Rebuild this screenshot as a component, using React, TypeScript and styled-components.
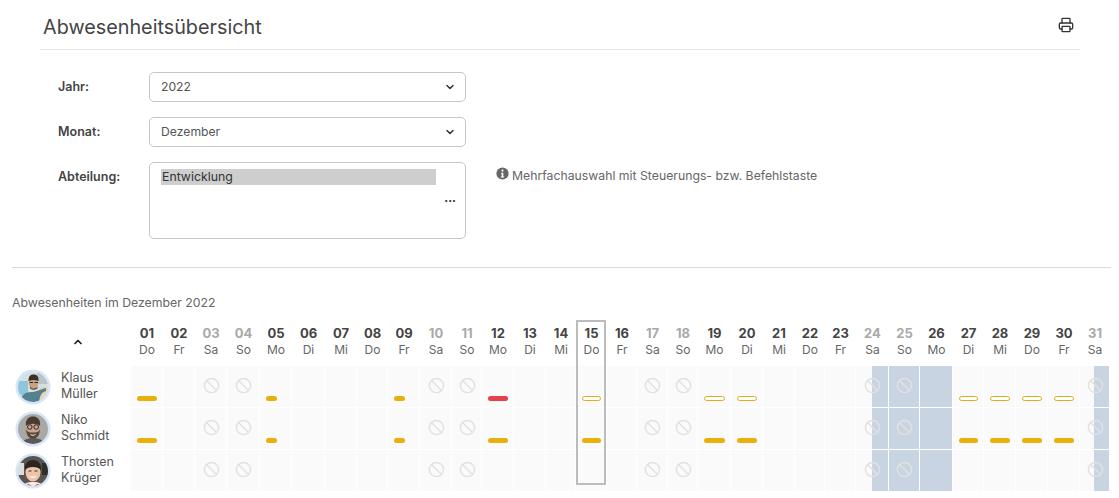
import React from "react";
import styled, { createGlobalStyle } from "styled-components";
import { Ban, ChevronDown, ChevronUp, Printer } from "lucide-react";

const Global = createGlobalStyle`
  html, body { margin: 0; padding: 0; background: #fff; }
  body { font-family: Inter, "Liberation Sans", sans-serif; color: #444; -webkit-font-smoothing: antialiased; }
`;

const Page = styled.div`
  width: 1119px;
  height: 498px;
  overflow: hidden;
  box-sizing: border-box;
  padding: 0 8px 0 12px;
`;

const Header = styled.header`
  height: 50px;
  margin: 0 31px 0 28px;
  padding: 0 6px 0 3px;
  box-sizing: border-box;
  border-bottom: 1px solid #e3e3e3;
  display: flex;
  align-items: center;
  justify-content: space-between;
`;

const Title = styled.h1`
  margin: 4px 0 0;
  font-size: 19.8px;
  line-height: 24px;
  font-weight: 400;
  color: #444;
`;

const PrintIcon = styled(Printer)`
  width: 16px;
  height: 16px;
  color: #333;
`;

const Form = styled.section`
  padding: 22px 0 28px 46px;
  display: flex;
  flex-direction: column;
  gap: 15px;
  border-bottom: 1px solid #d9d9d9;
`;

const FormRow = styled.div`
  display: grid;
  grid-template-columns: 91px 317px auto;
  align-items: start;
`;

const Label = styled.label`
  font-size: 12.5px;
  font-weight: 600;
  line-height: 30px;
  color: #444;
`;

const Select = styled.div`
  height: 30px;
  box-sizing: border-box;
  border: 1px solid #c6c6c6;
  border-radius: 5px;
  display: flex;
  align-items: center;
  justify-content: space-between;
  padding: 0 9px 2px 11px;
  font-size: 12.2px;
  color: #555;
`;

const Caret = styled(ChevronDown)`
  width: 12px;
  height: 12px;
  margin-top: 2px;
  color: #333;
  stroke-width: 3;
`;

const ListBox = styled.div`
  height: 77px;
  box-sizing: border-box;
  border: 1px solid #c6c6c6;
  border-radius: 5px;
  padding: 6px 29px 0 11px;
  display: flex;
  flex-direction: column;
`;

const Option = styled.div`
  height: 16px;
  line-height: 16px;
  background: #cecece;
  color: #333;
  font-size: 12.3px;
  padding-left: 1px;
`;

const Dots = styled.span`
  align-self: flex-end;
  margin: 10px -20px 0 0;
  font-size: 11px;
  font-weight: 800;
  line-height: 12px;
  color: #333;
`;

const Hint = styled.p`
  margin: 4px 0 0 30px;
  display: flex;
  align-items: flex-start;
  gap: 3px;
  font-size: 12.25px;
  line-height: 18px;
  color: #666;
  span {
    padding-top: 1px;
  }
`;

const InfoIcon = styled.svg`
  width: 13px;
  height: 13px;
  margin-top: 1px;
  color: #666;
`;

const Caption = styled.h2`
  margin: 27px 0 11px;
  font-size: 12.3px;
  line-height: 16px;
  font-weight: 400;
  color: #666;
`;

const widths = [119, 32, 32, 32, 33, 32, 33, 32, 31, 32, 32, 30, 32, 32, 30, 31, 30, 31, 30, 33, 32, 32, 30, 31, 33, 31, 33, 31, 32, 32, 32, 30];

const Grid = styled.div`
  position: relative;
  display: grid;
  grid-template-columns: ${widths.map((w) => `${w}px`).join(" ")};
  grid-template-rows: 44px repeat(3, 42px);
`;

const SortCell = styled.div`
  display: flex;
  align-items: center;
  justify-content: center;
  padding: 0 0 4px 13px;
  box-sizing: border-box;
`;

const SortIcon = styled(ChevronUp)`
  width: 12px;
  height: 12px;
  color: #222;
  stroke-width: 3.5;
`;

const DayHead = styled.div<{ $off: boolean }>`
  display: flex;
  flex-direction: column;
  align-items: center;
  padding-top: 2px;
  white-space: nowrap;
  b {
    font-size: 13px;
    line-height: 18px;
    font-weight: 700;
    color: ${(p) => (p.$off ? "#a9a9a9" : "#444")};
  }
  span {
    font-size: 12px;
    line-height: 16px;
    color: #666;
  }
`;

const Person = styled.div`
  display: flex;
  align-items: center;
  gap: 10px;
  padding: 0 0 0 3px;
  font-size: 12.5px;
  line-height: 16px;
  color: #555;
`;

const PersonName = styled.div`
  margin-top: -3px;
`;

const AvatarSvg = styled.svg`
  width: 36px;
  height: 36px;
  flex: none;
  margin-top: -1px;
`;

const blueBg: Record<string, string> = {
  none: "#fafafa",
  half: "linear-gradient(90deg, #fafafa 50%, #c9d4e2 50%)",
  full: "#c9d4e2",
};

const Cell = styled.div<{ $blue: string }>`
  box-sizing: border-box;
  border-right: 1px solid #fff;
  border-bottom: 1px solid #fff;
  background: ${(p) => blueBg[p.$blue]};
  display: flex;
  flex-direction: column;
  padding: 11px 5px 6px 6px;
  min-width: 0;
`;

const BanIcon = styled(Ban)`
  width: 17px;
  height: 17px;
  align-self: center;
  color: #e1e1e1;
  stroke-width: 2;
  flex: none;
`;

const Bar = styled.div<{ $half: boolean; $kind: string }>`
  margin-top: auto;
  box-sizing: border-box;
  height: 5px;
  width: ${(p) => (p.$half ? "11px" : "100%")};
  border-radius: 3px;
  background: ${(p) => (p.$kind === "red" ? "#e5404c" : p.$kind === "outline" ? "#fff" : "#e9b00c")};
  border: ${(p) => (p.$kind === "outline" ? "1.2px solid #e2ad1c" : "none")};
`;

const TodayFrame = styled.div`
  position: absolute;
  left: 564px;
  top: -2px;
  width: 30px;
  height: 165px;
  box-sizing: border-box;
  border: 2px solid #bcbcbc;
  pointer-events: none;
`;

const weekdays = ["Do", "Fr", "Sa", "So", "Mo", "Di", "Mi"];
const days = Array.from({ length: 31 }, (_, i) => {
  const wd = weekdays[i % 7];
  return {
    n: String(i + 1).padStart(2, "0"),
    wd,
    off: wd === "Sa" || wd === "So",
  };
});

const blue = (d: number) => (d === 24 || d === 31 ? "half" : d === 25 || d === 26 ? "full" : "none");

type Mark = { kind: string; half?: boolean };
const marks: Record<number, Mark>[] = [
  {
    1: { kind: "solid" },
    5: { kind: "solid", half: true },
    9: { kind: "solid", half: true },
    12: { kind: "red" },
    15: { kind: "outline" },
    19: { kind: "outline" },
    20: { kind: "outline" },
    27: { kind: "outline" },
    28: { kind: "outline" },
    29: { kind: "outline" },
    30: { kind: "outline" },
  },
  {
    1: { kind: "solid" },
    5: { kind: "solid", half: true },
    9: { kind: "solid", half: true },
    12: { kind: "solid" },
    15: { kind: "solid" },
    19: { kind: "solid" },
    20: { kind: "solid" },
    27: { kind: "solid" },
    28: { kind: "solid" },
    29: { kind: "solid" },
    30: { kind: "solid" },
  },
  {},
];

const people = [
  { first: "Klaus", last: "Müller", id: "klaus" },
  { first: "Niko", last: "Schmidt", id: "niko" },
  { first: "Thorsten", last: "Krüger", id: "thorsten" },
];

function Portrait({ id }: { id: string }) {
  return (
    <AvatarSvg viewBox="0 0 36 36" aria-hidden="true">
      <clipPath id={`clip-${id}`}>
        <circle cx="18" cy="18" r="15" />
      </clipPath>
      <filter id={`soft-${id}`}>
        <feGaussianBlur stdDeviation="0.45" />
      </filter>
      <circle cx="18" cy="18" r="17.5" fill="#d6e5f8" />
      <g clipPath={`url(#clip-${id})`}>
        <g filter={`url(#soft-${id})`}>
          {id === "klaus" && (
            <>
              <rect width="36" height="36" fill="#d5dfe2" />
              <rect x="2" y="12" width="11" height="14" fill="#8fc6da" />
              <rect x="24" y="18" width="10" height="16" fill="#e6d6b8" />
              <rect x="22" y="2" width="12" height="13" fill="#b9c4c8" />
              <path d="M5 34c0-8 6-11 11-11 5 0 7-2 15-4v3c-5 2-6 4-7 12z" fill="#55808f" />
              <ellipse cx="18.500" cy="14" rx="4.800" ry="6" fill="#c9a184" />
              <path d="M13.500 12c0-5 2-6.500 5-6.500s5.500 1.500 5 6.500c-3-1.500-7-1.500-10 0z" fill="#3a2f28" />
              <path d="M14.500 13.500h3.500m1.500 0h3.500" stroke="#2b2b2b" strokeWidth="1.200" />
              <path d="M15 17.500c2 2.500 5.500 2.500 7.500 0v2c-2 1.800-5.500 1.800-7.500 0z" fill="#6a5140" />
            </>
          )}
          {id === "niko" && (
            <>
              <rect width="36" height="36" fill="#a8a8a6" />
              <path d="M5 36c1-7 7-9 13-9s12 2 13 9z" fill="#5b5956" />
              <ellipse cx="18" cy="17" rx="6.800" ry="9" fill="#c9a48d" />
              <path d="M11 15c-1-7 3-9.500 7-9.500s8 2.500 7 9.500c-2-3-12-3-14 0z" fill="#4a3a2e" />
              <path d="M11.200 18c0 7 3 9.500 6.800 9.500s6.800-2.500 6.800-9.500c-1 3-3 3.500-6.800 3.500s-5.800-.5-6.800-3.500z" fill="#5a4638" />
              <circle cx="14.800" cy="16" r="2.300" fill="none" stroke="#2a2a2a" strokeWidth="1" />
              <circle cx="21.200" cy="16" r="2.300" fill="none" stroke="#2a2a2a" strokeWidth="1" />
              <path d="M15.500 23.500c1.500 1 3.500 1 5 0" stroke="#eee" strokeWidth="1" fill="none" />
            </>
          )}
          {id === "thorsten" && (
            <>
              <rect width="36" height="36" fill="#5a5450" />
              <rect x="2" y="10" width="7" height="12" fill="#dcdcda" />
              <rect x="27" y="10" width="7" height="12" fill="#2f2d2c" />
              <path d="M6 36c1-5 6-7 12-7s11 2 12 7z" fill="#f3f0ec" />
              <path d="M9 34c3-5 15-5 18 0l-3 2H12z" fill="#d8323a" />
              <path d="M12 30h12l-6 4z" fill="#f6e6dc" />
              <ellipse cx="18" cy="19" rx="7.500" ry="9.500" fill="#efc5aa" />
              <path d="M10 17c-1-7 4-10 8-10s9 3 8 10c-3-4-13-4-16 0z" fill="#2b2624" />
              <path d="M13.500 18h3m3 0h3" stroke="#3a2d28" strokeWidth="1.100" />
              <path d="M14 23c2 2.500 6 2.500 8 0-2 .7-6 .7-8 0z" fill="#fff" />
            </>
          )}
        </g>
      </g>
    </AvatarSvg>
  );
}

export default function App() {
  return (
    <Page>
      <Global />
      <Header>
        <Title>Abwesenheitsübersicht</Title>
        <PrintIcon />
      </Header>
      <Form>
        <FormRow>
          <Label>Jahr:</Label>
          <Select>
            2022
            <Caret />
          </Select>
        </FormRow>
        <FormRow>
          <Label>Monat:</Label>
          <Select>
            Dezember
            <Caret />
          </Select>
        </FormRow>
        <FormRow>
          <Label>Abteilung:</Label>
          <ListBox>
            <Option>Entwicklung</Option>
            <Dots>···</Dots>
          </ListBox>
          <Hint>
            <InfoIcon viewBox="0 0 16 16" aria-hidden="true">
              <circle cx="8" cy="8" r="7.500" fill="currentColor" />
              <circle cx="8" cy="4.400" r="1.400" fill="#fff" />
              <path d="M6.300 7h2.700v4.600h1.100v1.200H5.900v-1.200h1.100V8.200h-.7z" fill="#fff" />
            </InfoIcon>
            <span>Mehrfachauswahl mit Steuerungs- bzw. Befehlstaste</span>
          </Hint>
        </FormRow>
      </Form>
      <Caption>Abwesenheiten im Dezember 2022</Caption>
      <Grid>
        <SortCell>
          <SortIcon />
        </SortCell>
        {days.map((d) => (
          <DayHead key={d.n} $off={d.off}>
            <b>{d.n}</b>
            <span>{d.wd}</span>
          </DayHead>
        ))}
        {people.map((p, r) => (
          <React.Fragment key={p.id}>
            <Person>
              <Portrait id={p.id} />
              <PersonName>
                {p.first}
                <br />
                {p.last}
              </PersonName>
            </Person>
            {days.map((d, i) => {
              const m = marks[r][i + 1];
              return (
                <Cell key={d.n} $blue={blue(i + 1)}>
                  {d.off && <BanIcon />}
                  {m && <Bar $kind={m.kind} $half={!!m.half} />}
                </Cell>
              );
            })}
          </React.Fragment>
        ))}
        <TodayFrame />
      </Grid>
    </Page>
  );
}
